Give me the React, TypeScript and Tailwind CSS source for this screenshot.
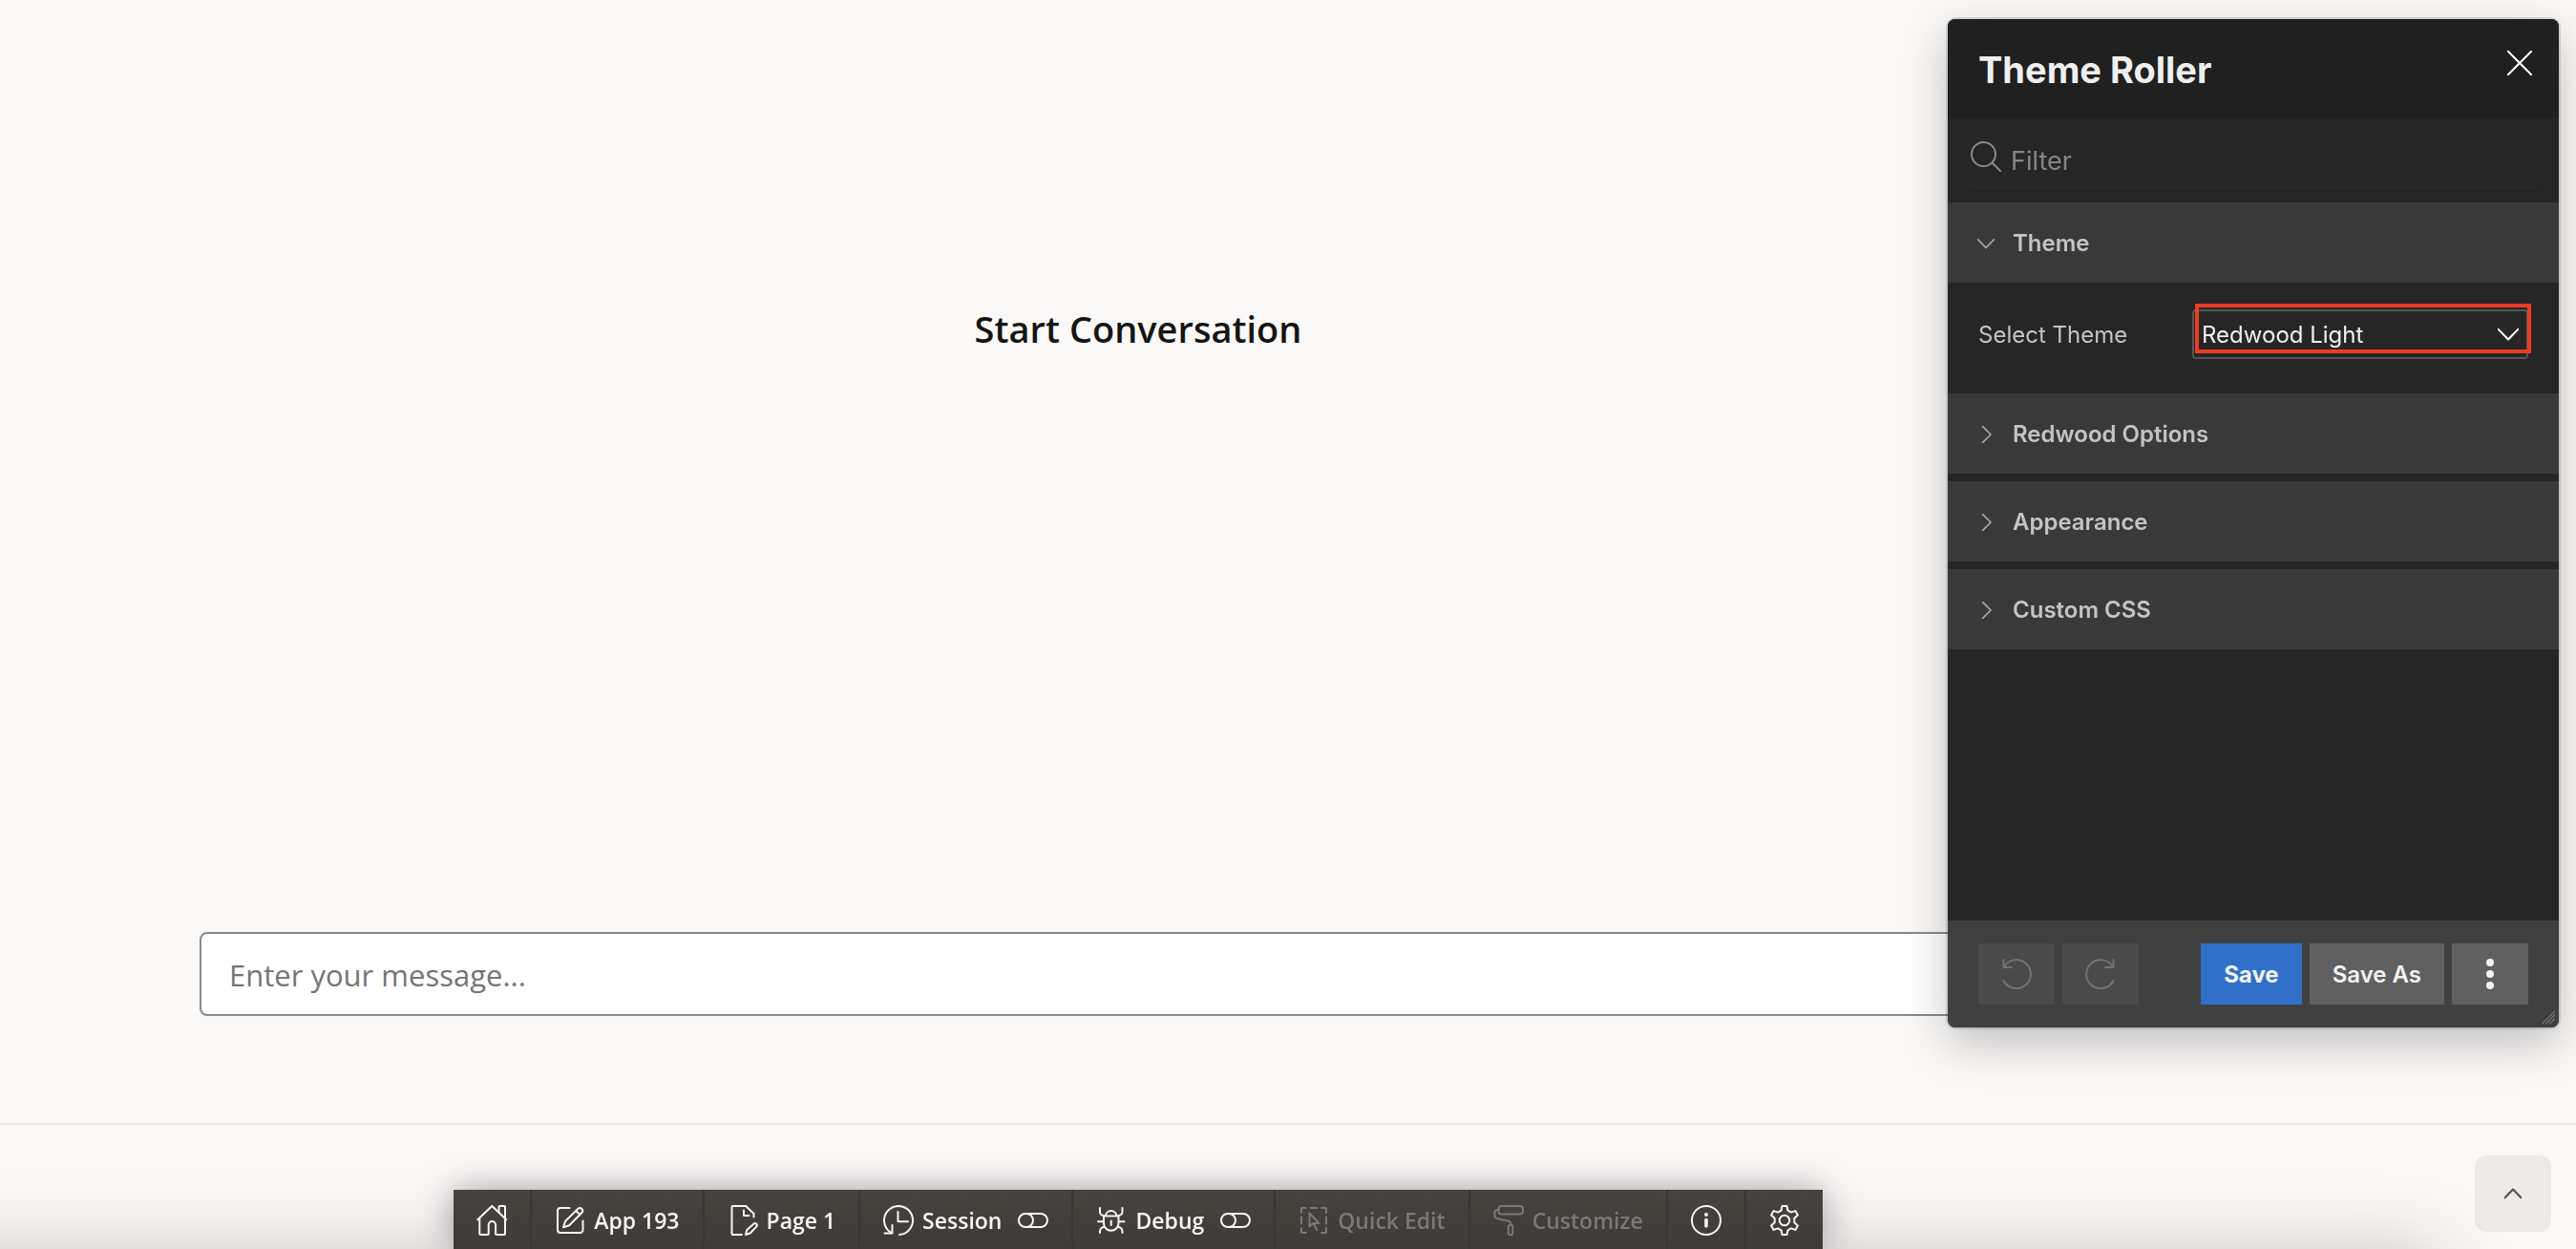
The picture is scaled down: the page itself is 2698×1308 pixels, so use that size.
import { useState } from "react";
import type { ReactNode } from "react";

function Icon({ children, className = "size-8" }: { children: ReactNode; className?: string }) {
  return (
    <svg
      viewBox="0 0 32 32"
      className={`shrink-0 ${className}`}
      fill="none"
      stroke="currentColor"
      strokeWidth="2"
      strokeLinecap="round"
      strokeLinejoin="round"
      aria-hidden="true"
    >
      {children}
    </svg>
  );
}

const HomeIcon = () => (
  <Icon>
    <path d="M1.3 15.3 16.3 1 31.3 15.3" />
    <path d="M3.3 13.8V30a1 1 0 0 0 1 1h7.4a1 1 0 0 0 1-1V20.8a3.7 3.7 0 0 1 7.4 0V30a1 1 0 0 0 1 1h7.9a1 1 0 0 0 1-1V2a1 1 0 0 0-1-1h-4.5a1 1 0 0 0-1 1v5.5" />
  </Icon>
);

const EditIcon = () => (
  <Icon>
    <path d="M15.5 3H6a3 3 0 0 0-3 3v20a3 3 0 0 0 3 3h20.5a3 3 0 0 0 3-3v-9.500" />
    <path d="M9 23.200 11 17 24.300 3.900a2.900 2.900 0 0 1 4.100 4.100L15.200 21.200Z" />
    <path d="m22.300 6 4.100 4.100" />
  </Icon>
);

const PageIcon = () => (
  <Icon>
    <path d="M15 31H5.500a1 1 0 0 1-1-1V2a1 1 0 0 1 1-1h13.700L27.500 9v3.500" />
    <path d="M17 5.500V11h5.500" />
    <path d="M19 31l1.300-4.900 7-6.400a2 2 0 0 1 2.900 2.900L23.700 29.500Z" />
  </Icon>
);

const SessionIcon = () => (
  <Icon>
    <path d="M17 31A15 15 0 1 0 8 28.700" />
    <path d="M9.500 21v8.500H1.500" />
    <path d="M15.500 7v10.300H26" />
  </Icon>
);

const ToggleIcon = () => (
  <Icon>
    <rect x="1" y="9" width="30" height="14" rx="7" />
    <path d="M9 9a7 7 0 0 1 0 14" />
  </Icon>
);

const DebugIcon = () => (
  <Icon>
    <path d="M8 11.500H23.500V19a7.750 7.750 0 0 1-15.500 0Z" />
    <path d="M10 11a5.800 5.800 0 0 1 11.500 0" />
    <path d="M15.750 16.500v4.500" />
    <path d="M4 3v4a4 4 0 0 0 4 4M27.500 3v4a4 4 0 0 1-4 4M2 17.300h5.500M24 17.300h5.500M4 29v-1.500a4.500 4.500 0 0 1 5-4.500M27.500 29v-1.500a4.500 4.500 0 0 0-5-4.500" />
  </Icon>
);

const QuickEditIcon = () => (
  <Icon>
    <path d="M3 8V4a1 1 0 0 1 1-1h4M12.500 3h7M24 3h4a1 1 0 0 1 1 1v4M29 12.500v7M29 24v4a1 1 0 0 1-1 1h-4M8 29H4a1 1 0 0 1-1-1v-4M3 12.500v7" />
    <path d="M11.500 8.500v14l3.800-3.500h6.200ZM16 19.500l3.200 6.500" />
  </Icon>
);

const CustomizeIcon = () => (
  <Icon>
    <rect x="5.500" y="1" width="25.500" height="8.500" rx="3" />
    <path d="M5.500 5H4a2.500 2.500 0 0 0-2.500 2.500V11a3.500 3.500 0 0 0 2.800 3.300l11.200 2.200a3 3 0 0 1 2.500 3v1.500" />
    <rect x="15.800" y="21" width="4.500" height="10" rx="1.300" />
  </Icon>
);

const InfoIcon = () => (
  <Icon>
    <circle cx="16" cy="16" r="15" />
    <circle cx="16" cy="10" r="2" fill="currentColor" stroke="none" />
    <path d="M16 15.500v6.500" strokeWidth="3.600" />
  </Icon>
);

const GearIcon = () => (
  <Icon>
    <path d="M13.500 1h5l1 4.700 3.300 1.900 4.600-1.500 2.500 4.300-3.600 3.300v4.600l3.600 3.300-2.500 4.300-4.600-1.500-3.300 1.900-1 4.700h-5l-1-4.700-3.300-1.900-4.600 1.500-2.500-4.300 3.600-3.300v-4.600L2.100 10.400l2.500-4.300 4.600 1.500 3.300-1.900Z" />
    <circle cx="16" cy="16" r="5.300" />
  </Icon>
);

const SearchIcon = () => (
  <Icon>
    <circle cx="13.500" cy="13.500" r="12.500" />
    <path d="m22.500 22.500 8.500 8.500" />
  </Icon>
);

const UndoIcon = () => (
  <Icon>
    <path d="M2.500 1v8H11" />
    <path d="M3 8.500A15 15 0 1 1 2.500 23" />
  </Icon>
);

const RedoIcon = () => (
  <Icon>
    <path d="M29.500 1v8H21" />
    <path d="M29 8.500A15 15 0 1 0 29.500 23" />
  </Icon>
);

type Tool = {
  name: string;
  label?: string;
  icon: ReactNode;
  toggle?: boolean;
  disabled?: boolean;
};

const tools: Tool[] = [
  { name: "Home", icon: <HomeIcon /> },
  { name: "App 193", label: "App 193", icon: <EditIcon /> },
  { name: "Page 1", label: "Page 1", icon: <PageIcon /> },
  { name: "Session", label: "Session", icon: <SessionIcon />, toggle: true },
  { name: "Debug", label: "Debug", icon: <DebugIcon />, toggle: true },
  { name: "Quick Edit", label: "Quick Edit", icon: <QuickEditIcon />, disabled: true },
  { name: "Customize", label: "Customize", icon: <CustomizeIcon />, disabled: true },
  { name: "Info", icon: <InfoIcon /> },
  { name: "Settings", icon: <GearIcon /> },
];

function DeveloperToolbar() {
  return (
    <div className="pointer-events-none fixed inset-x-0 bottom-0 flex justify-center pr-[314px]">
      <div
        role="toolbar"
        aria-label="Developer toolbar"
        className="pointer-events-auto flex divide-x-2 divide-[#3a3633] bg-linear-to-b from-[#47433e] to-[#3f3a37] text-[23px] leading-8 font-semibold text-[#f7f6f5] shadow-[0_0_36px_rgba(0,0,0,0.36)]"
      >
        {tools.map((t) => (
          <button
            key={t.name}
            type="button"
            aria-label={t.name}
            disabled={t.disabled}
            className="flex items-center gap-[9px] px-6 pt-4 pb-3.5 disabled:text-[#7c7875]"
          >
            {t.icon}
            {t.label && <span>{t.label}</span>}
            {t.toggle && (
              <span className="ml-2">
                <ToggleIcon />
              </span>
            )}
          </button>
        ))}
      </div>
    </div>
  );
}

function SectionHeader({ label, open, onClick }: { label: string; open: boolean; onClick: () => void }) {
  return (
    <h3>
      <button
        type="button"
        aria-expanded={open}
        onClick={onClick}
        className="flex w-full items-center gap-[19px] bg-[#393939] pt-[27px] pr-8 pb-[25px] pl-[31px] text-left text-[24px] leading-8 font-semibold text-[#c4c4c4]"
      >
        <Icon className="size-[18px] text-[#a8a8a8]">
          {open ? <path d="M1 8.500 16 24 31 8.500" strokeWidth="3" /> : <path d="M10 1 25 16 10 31" strokeWidth="3" />}
        </Icon>
        {label}
      </button>
    </h3>
  );
}

function ThemeRoller() {
  const [open, setOpen] = useState<string>("Theme");
  const toggle = (name: string) => setOpen(open === name ? "" : name);

  return (
    <section
      role="dialog"
      aria-labelledby="roller-title"
      className="fixed top-5 right-[18px] flex min-h-[1056px] w-[640px] flex-col overflow-hidden rounded-lg bg-[#262626] font-['Inter',sans-serif] shadow-[0_0_0_2px_rgba(0,0,0,0.12),0_16px_48px_rgba(0,0,0,0.24)]"
    >
      <header className="flex items-start justify-between bg-[#202020] pt-[29px] pr-7 pb-[27px] pl-8">
        <h2 id="roller-title" className="text-[38px] leading-12 font-bold text-[#efefef]">
          Theme Roller
        </h2>
        <button type="button" aria-label="Close" className="mt-1 text-white">
          <Icon className="size-[26px]">
            <path d="M1 1 31 31M31 1 1 31" strokeWidth="2.500" />
          </Icon>
        </button>
      </header>

      <div className="mx-4 mt-4 mb-3 flex h-[60px] items-center gap-2.5 rounded-lg pl-2 text-[#8a8a8a] shadow-[0_1px_2px_rgba(0,0,0,0.15)]">
        <span className="pb-3">
          <SearchIcon />
        </span>
        <input
          type="text"
          aria-label="Filter"
          placeholder="Filter"
          className="min-w-0 flex-1 bg-transparent pb-0.5 text-[27px] leading-9 text-[#efefef] outline-none placeholder:text-[#868686]"
        />
      </div>

      <div className="flex flex-1 flex-col gap-2">
        <div>
          <SectionHeader label="Theme" open={open === "Theme"} onClick={() => toggle("Theme")} />
          {open === "Theme" && (
            <div className="flex items-center justify-between pt-7 pr-8 pb-7 pl-8 text-[24px] leading-8">
              <label htmlFor="theme" className="pt-0.5 text-[#c4c4c4]">
                Select Theme
              </label>
              <div className="relative w-[352px]">
                <select
                  id="theme"
                  className="h-[52px] w-full appearance-none rounded border-2 border-[#565656] bg-[#262626] pt-0.5 pr-12 pl-2 text-[#efefef]"
                >
                  <option>Redwood Light</option>
                </select>
                <Icon className="pointer-events-none absolute top-[15px] right-2.5 size-[22px] text-white">
                  <path d="M1 8.500 16 24 31 8.500" strokeWidth="3" />
                </Icon>
                <div className="pointer-events-none absolute -top-1.5 -right-[3px] h-[52px] w-[352px] border-4 border-[#ea3d23]" />
              </div>
            </div>
          )}
        </div>
        {["Redwood Options", "Appearance", "Custom CSS"].map((name) => (
          <SectionHeader key={name} label={name} open={open === name} onClick={() => toggle(name)} />
        ))}
      </div>

      <footer className="relative flex items-center gap-2 bg-[#404040] px-8 py-6 text-[24px] leading-8 font-semibold text-[#f3f3f3]">
        <button type="button" aria-label="Undo" disabled className="flex h-16 w-20 items-center justify-center bg-[#4a4a4a] text-[#737373]">
          <UndoIcon />
        </button>
        <button type="button" aria-label="Redo" disabled className="flex h-16 w-20 items-center justify-center bg-[#4a4a4a] text-[#737373]">
          <RedoIcon />
        </button>
        <button type="button" className="ml-auto h-16 bg-[#3070c8] px-6 pt-0.5 font-bold">
          Save
        </button>
        <button type="button" className="h-16 bg-[#606060] px-6 pt-0.5">
          Save As
        </button>
        <button type="button" aria-label="More options" className="flex h-16 w-20 items-center justify-center bg-[#606060]">
          <svg viewBox="0 0 32 32" className="size-8" fill="currentColor" aria-hidden="true">
            <circle cx="16" cy="4" r="4" />
            <circle cx="16" cy="16" r="4" />
            <circle cx="16" cy="28" r="4" />
          </svg>
        </button>
        <svg viewBox="0 0 16 16" className="absolute right-1 bottom-1 size-4" strokeWidth="1" aria-hidden="true">
          <path d="M0.500 16 16 0.500" stroke="#2a2a2a" />
          <path d="M2.500 16 16 2.500M6.500 16 16 6.500M10.500 16 16 10.500" stroke="#9a9a9a" />
        </svg>
      </footer>
    </section>
  );
}

export default function App() {
  return (
    <div className="flex min-h-screen flex-col bg-[#fbf9f8] font-['Open_Sans',sans-serif]">
      <main className="flex flex-1 flex-col pr-[314px]">
        <h1 className="flex-1 pt-[316px] text-center text-[38px] leading-[56px] font-semibold text-[#161513]">
          Start Conversation
        </h1>
        <div className="px-[209px] pb-28">
          <input
            type="text"
            aria-label="Message"
            placeholder="Enter your message..."
            className="block h-22 w-full rounded-lg border-2 border-[#8b8a89] bg-white px-[29px] pt-0.5 text-[31px] text-[#161513] outline-none placeholder:text-[#757575]"
          />
        </div>
      </main>

      <footer className="h-33 border-t-2 border-[#e5e3e2]" />

      <button
        type="button"
        aria-label="Scroll to top"
        className="fixed right-[26px] bottom-[18px] flex size-20 items-center justify-center rounded-xl bg-[#ecebe9] text-[#565452]"
      >
        <Icon className="size-[18px]">
          <path d="M1 23.500 16 8 31 23.500" strokeWidth="4" />
        </Icon>
      </button>

      <div className="pointer-events-none fixed right-[140px] -bottom-40 -left-40 h-40 shadow-[0_0_80px_rgba(0,0,0,0.2)]" />
      <DeveloperToolbar />
      <ThemeRoller />
    </div>
  );
}
